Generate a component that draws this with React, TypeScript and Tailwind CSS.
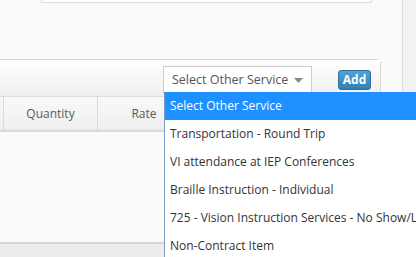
import React from "react";

const font = { fontFamily: '"Open Sans", "Noto Sans", Arial, sans-serif' };

export default function App() {
  const items = [
    "Transportation - Round Trip",
    "VI attendance at IEP Conferences",
    "Braille Instruction - Individual",
    "725 - Vision Instruction Services - No Show/Late Cancel",
    "Non-Contract Item",
  ];
  return (
    <div className="relative w-[416px] h-[257px] overflow-hidden bg-[#f2f2f2] flex" style={font}>
      <div className="w-[403px] h-full bg-[#fafafa] border-r border-[#dcdcdc] flex flex-col shrink-0">
        <div className="ml-[41px] w-[331px] h-[3px] border-x border-b border-[#dddddd] bg-white" />
        <div className="h-[56px]" />
        <div className="-ml-[6px] w-[387px] flex flex-col border border-[#d6d6d6] rounded-tr-[4px] bg-[#fafafa] h-[184px]">
          <div className="h-[37px] flex items-start justify-end pr-[9px] bg-gradient-to-b from-[#ffffff] to-[#efefef] border-b border-[#dcdcdc]">
            <div className="w-[149px] h-[28px] mt-[6px] bg-white border border-[#cccccc] flex items-center pl-[8px] pr-[8px] text-[12.5px] text-[#555555]">
              <span className="flex-1">Select Other Service</span>
              <svg width="9" height="5" viewBox="0 0 9 5">
                <path d="M0 0 L9 0 L4.5 5 Z" fill="#888888" />
              </svg>
            </div>
            <button className="ml-[26px] mt-[10px] w-[33px] h-[20px] rounded-[3px] bg-gradient-to-b from-[#4fa3d6] to-[#337fb3] border border-[#2e6f9c] text-white text-[12px] font-bold leading-none">
              Add
            </button>
          </div>
          <div className="h-[35px] flex text-[12px] text-[#5a5a5a] bg-gradient-to-b from-[#f9f9f9] to-[#eeeeee] border-b-2 border-[#d9d9d9]">
            <div className="w-[9px] border-r border-[#dadada]" />
            <div className="w-[94px] border-r border-[#dadada] flex items-center justify-center">Quantity</div>
            <div className="w-[92px] flex items-center justify-center">Rate</div>
          </div>
          <div className="flex-1 bg-[#fafafa]" />
        </div>
        <div className="flex-1 bg-[#ececec] border-t border-[#d4d4d4] -ml-[6px] w-[387px]" />
      </div>
      <div className="flex-1" />
      <div className="absolute left-[164px] top-[92px] w-[260px] h-[170px] bg-white border-l border-[#7a9cc8] text-[12px] text-[#333333] whitespace-nowrap">
        <div className="h-[28px] bg-[#1e90ff] text-white flex items-center pl-[5px]">Select Other Service</div>
        {items.map((t) => (
          <div key={t} className="h-[28px] flex items-center pl-[5px]">
            {t}
          </div>
        ))}
      </div>
    </div>
  );
}
